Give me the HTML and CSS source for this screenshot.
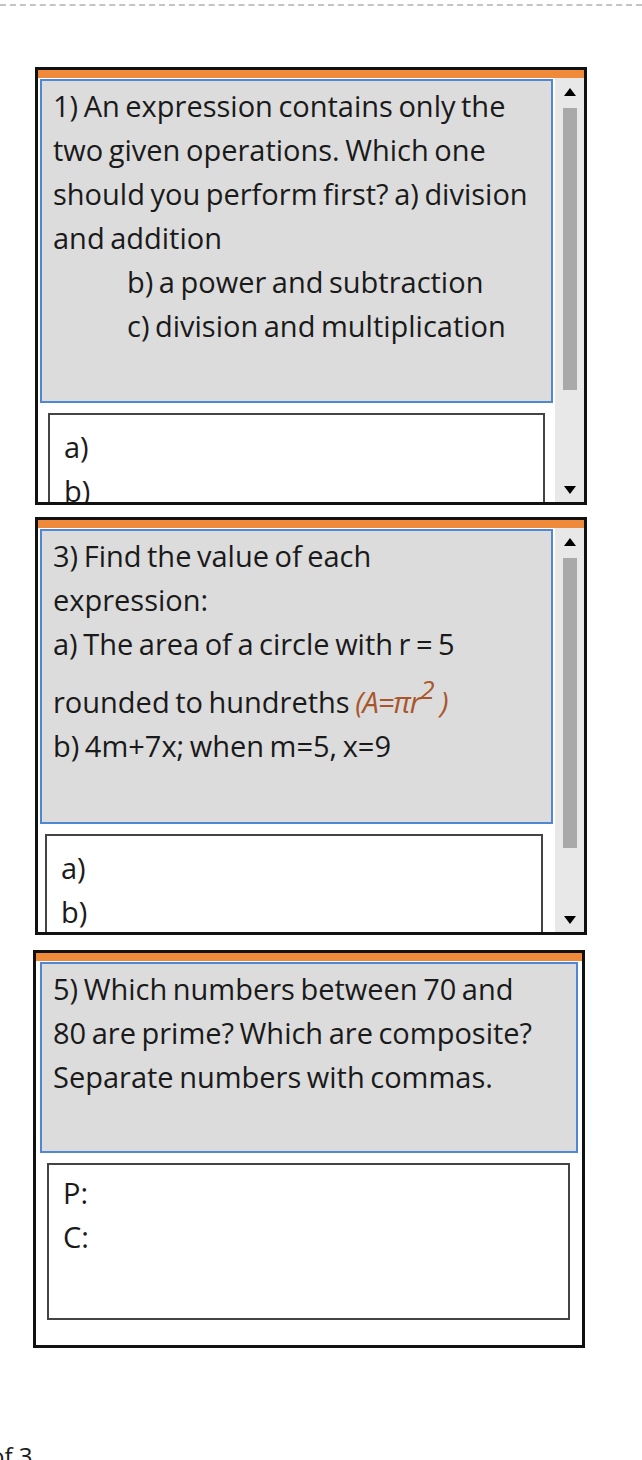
FILE: index.html
```html
<!DOCTYPE html>
<html lang="en">
<head>
<meta charset="UTF-8">
<meta name="viewport" content="width=device-width, initial-scale=1.0">
<title>Worksheet</title>
<link rel="stylesheet" href="styles.css">
</head>
<body>
<div class="page-top"></div>

<div class="card card-1">
  <div class="card-body">
    <div class="content">
      <div class="question q-1">
        <p>1) An expression contains only the two given operations. Which one should you perform first? a) division and addition</p>
        <p class="indent">b) a power and subtraction</p>
        <p class="indent">c) division and multiplication</p>
      </div>
      <div class="answer">
        <p>a)</p>
        <p>b)</p>
      </div>
    </div>
    <div class="scrollbar">
      <span class="arrow up"></span>
      <div class="track"><div class="thumb thumb-1"></div></div>
      <span class="arrow down"></span>
    </div>
  </div>
</div>

<div class="card card-2">
  <div class="card-body">
    <div class="content">
      <div class="question q-2">
        <p>3) Find the value of each expression:</p>
        <p>a) The area of a circle with r = 5</p>
        <p class="formula-line">rounded to hundreths <span class="formula">(A=&pi;r<sup>2</sup> )</span></p>
        <p>b) 4m+7x; when m=5, x=9</p>
      </div>
      <div class="answer">
        <p>a)</p>
        <p>b)</p>
      </div>
    </div>
    <div class="scrollbar">
      <span class="arrow up"></span>
      <div class="track"><div class="thumb thumb-2"></div></div>
      <span class="arrow down"></span>
    </div>
  </div>
</div>

<div class="card card-3">
  <div class="card-body">
    <div class="content">
      <div class="question q-3">
        <p>5) Which numbers between 70 and 80 are prime? Which are composite? Separate numbers with commas.</p>
      </div>
      <div class="answer answer-wide">
        <p>P:</p>
        <p>C:</p>
      </div>
    </div>
  </div>
</div>

<div class="page-count">1 of 3</div>
</body>
</html>
```

FILE: styles.css
```css
body {
  margin: 0;
  padding: 0;
  font-family: "Open Sans", sans-serif;
  color: #1a1a1a;
  background-color: #fff;
  overflow: hidden;
}
p {
  margin: 0;
}
.page-top {
  height: 4px;
  border-bottom: 2px dashed #c4c4c4;
  margin-bottom: 61px;
}
.card {
  margin-left: 35px;
  width: 546px;
  border: 3px solid #111;
  background-color: #fff;
  overflow: hidden;
}
.card-1 {
  height: 432px;
  margin-bottom: 12px;
}
.card-2 {
  height: 412px;
  margin-bottom: 15px;
}
.card-3 {
  height: 392px;
  margin-left: 33px;
}
.card-body {
  display: flex;
  border-top: 8px solid #ef8a3a;
  height: 100%;
  box-sizing: border-box;
}
.content {
  flex: 1;
  padding: 1px 0 0 2px;
  min-width: 0;
}
.question {
  background-color: #dcdcdc;
  border: 2px solid #4f87d2;
  padding: 3px 2px 0 11px;
  font-size: 29px;
  line-height: 44px;
  word-spacing: -2px;
  box-sizing: border-box;
}
.q-1 {
  height: 324px;
}
.q-2 {
  height: 295px;
  padding-right: 40px;
}
.q-3 {
  height: 191px;
  margin-right: 4px;
  padding-right: 30px;
}
.indent {
  padding-left: 74px;
}
.formula-line {
  padding-top: 14px;
}
.formula {
  font-style: italic;
  color: #a9552b;
  word-spacing: 0;
  letter-spacing: -1px;
}
.formula sup {
  font-size: 26px;
  line-height: 0;
  vertical-align: 14px;
}
.answer {
  margin: 10px 8px 0 8px;
  border: 2px solid #444;
  padding: 10px 12px 0 14px;
  font-size: 29px;
  line-height: 44px;
  height: 200px;
}
.card-2 .answer {
  margin-left: 5px;
  margin-right: 10px;
}
.card-3 .content {
  padding: 1px 0 0 4px;
}
.answer-wide {
  margin: 10px 12px 0 7px;
  height: 157px;
  box-sizing: border-box;
  padding-top: 6px;
}
.scrollbar {
  width: 29px;
  margin-left: 2px;
  background-color: #e8e8e8;
  display: flex;
  flex-direction: column;
  align-items: center;
}
.arrow {
  width: 0;
  height: 0;
  border-left: 6px solid transparent;
  border-right: 6px solid transparent;
}
.arrow.up {
  border-bottom: 8px solid #000;
  margin-top: 10px;
}
.arrow.down {
  border-top: 8px solid #000;
  margin-bottom: 8px;
}
.track {
  flex: 1;
  width: 100%;
  display: flex;
  justify-content: center;
  padding-top: 12px;
}
.thumb {
  width: 14px;
  background-color: #a9a9a9;
}
.thumb-1 {
  height: 282px;
}
.thumb-2 {
  height: 290px;
}
.page-count {
  margin-top: 96px;
  margin-left: -30px;
  font-family: "Open Sans", sans-serif;
  font-size: 24px;
  line-height: 24px;
}
```
